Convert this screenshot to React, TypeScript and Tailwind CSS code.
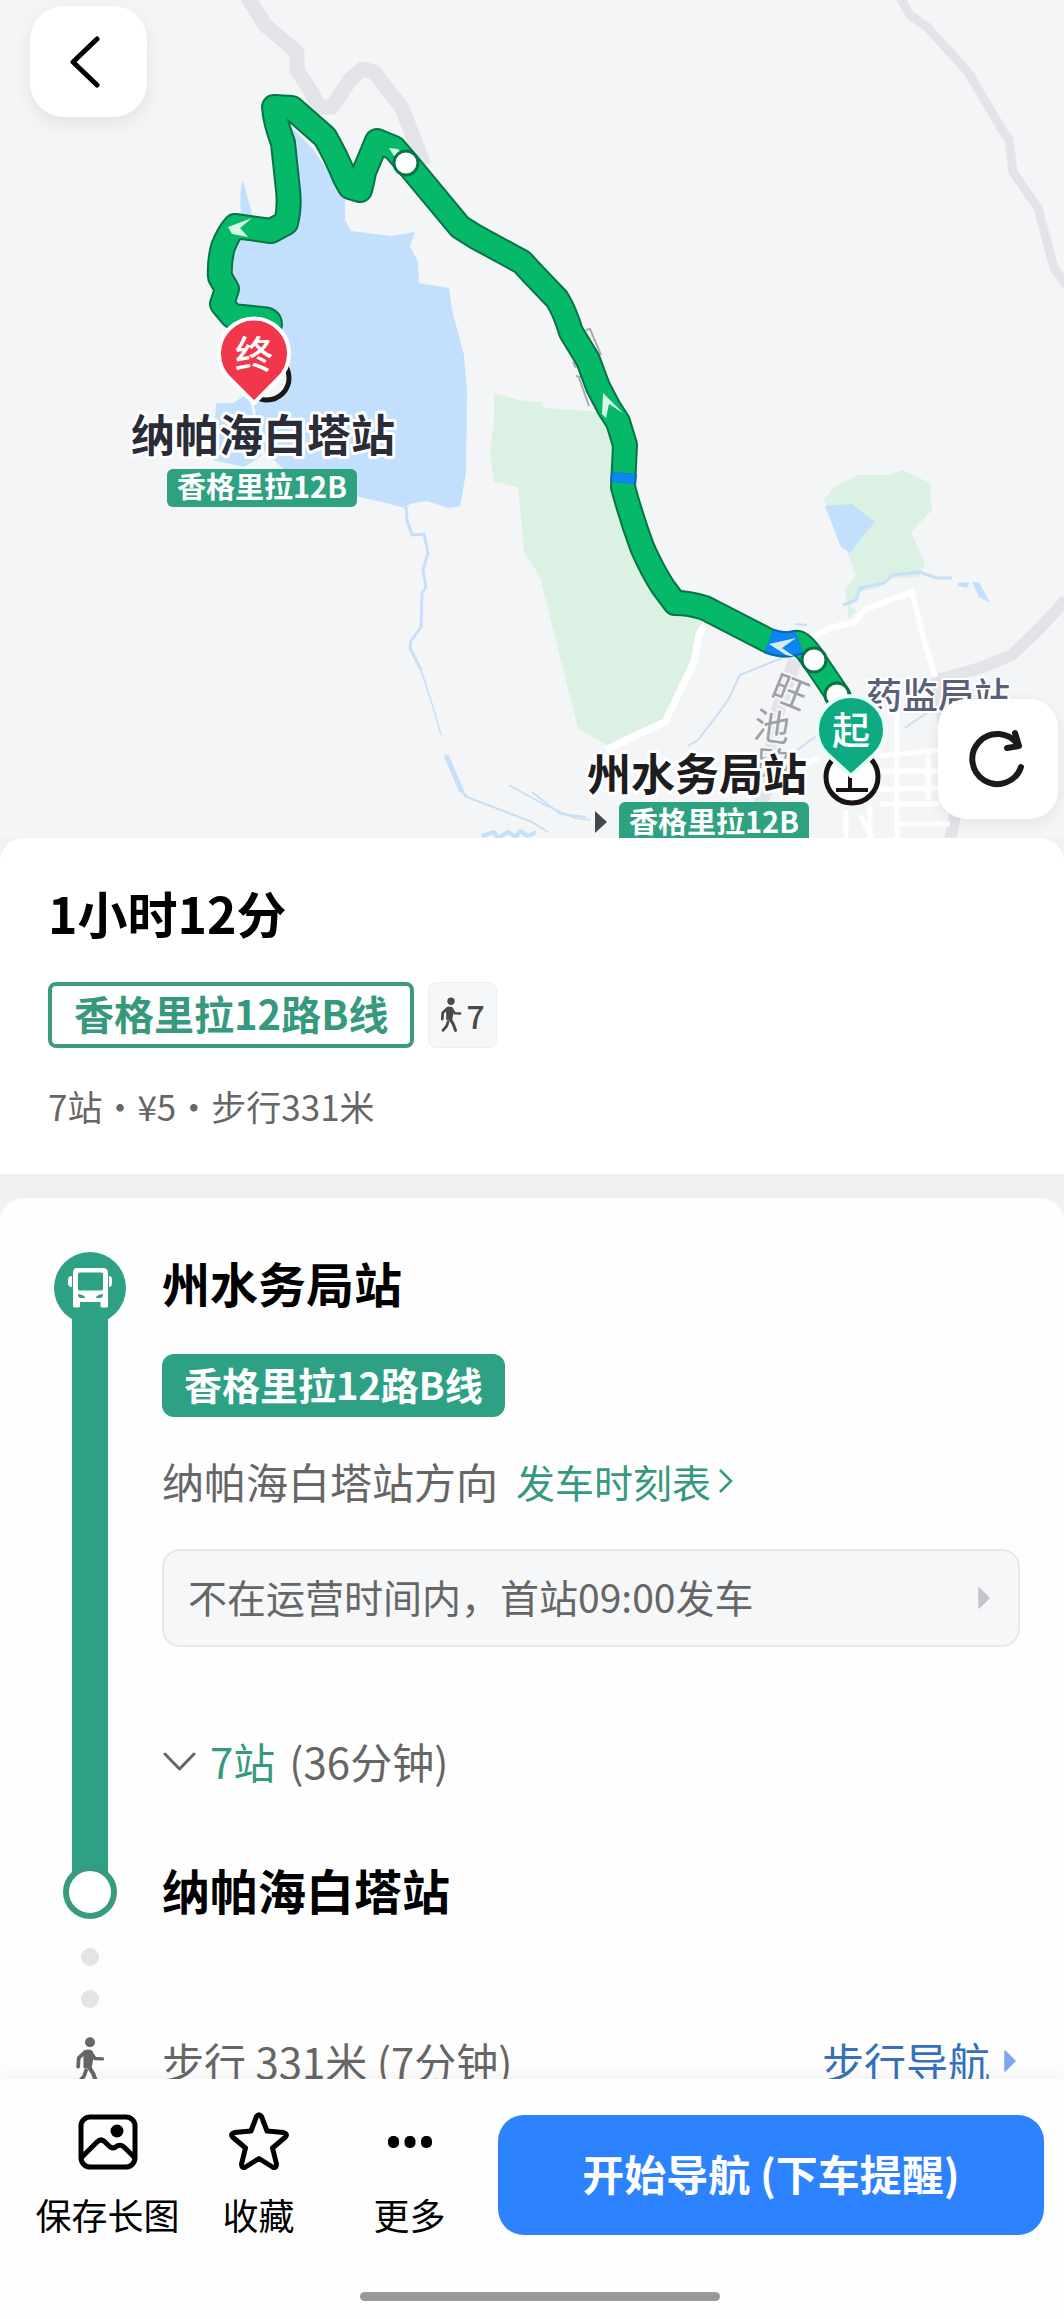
import React, { useState } from 'react';

interface IconProps {
  className?: string;
}

function WalkIcon({ className }: IconProps) {
  return (
    <svg viewBox="0 0 24 38" className={className} fill="none" stroke="currentColor" strokeLinecap="round" strokeLinejoin="round" aria-hidden="true">
      <circle cx="12" cy="4" r="4" fill="currentColor" stroke="none" />
      <path d="M7.5 11.5 Q10.5 9.5 13.5 11.5 L14 17 L12.5 24.5 L7.5 24 Z" fill="currentColor" strokeWidth="1.5" />
      <path d="M8 12 L3 16.500 L2.500 23.500" strokeWidth="3" />
      <path d="M13 12.500 L16 17 L22 17.300" strokeWidth="2.700" />
      <path d="M11 23.500 L14.500 29 L17 35.800" strokeWidth="3.300" />
      <path d="M8.800 26.500 L7.300 31 L3.200 35.800" strokeWidth="3" />
    </svg>
  );
}

function BusIcon({ className }: IconProps) {
  return (
    <svg viewBox="0 0 44 40" className={className} aria-hidden="true">
      <path
        fill="currentColor"
        fillRule="evenodd"
        d="M9 0H35Q40 0 40 5V38Q40 39.500 38.500 39.500H34Q32.500 39.500 32.500 38V34H12V38Q12 39.500 10.500 39.500H6.500Q5 39.500 5 38V5Q5 0 9 0ZM11.500 4.500Q10 4.500 10 6V21Q10 22.500 11.500 22.500H33.500Q35 22.500 35 21V6Q35 4.500 33.500 4.500ZM10 26Q10 30 13 30H17.500Q16 26.500 10 26ZM35 26Q35 30 32 30H27.500Q29 26.500 35 26Z"
      />
      <path fill="currentColor" d="M4 8V19Q0 19 0 15V12Q0 8 4 8ZM41 8V19Q44 19 44 15V12Q44 8 41 8Z" />
    </svg>
  );
}

function SolidArrow({ className }: IconProps) {
  return (
    <svg viewBox="0 0 12 22" className={className} aria-hidden="true">
      <path d="M1 1 L11 11 L1 21 Z" fill="currentColor" stroke="currentColor" strokeWidth="1.500" strokeLinejoin="round" />
    </svg>
  );
}

const ROUTE =
  'M270 324 Q270 319 262 319 L232 316 L222 304 L227 289 L220 277 Q219 262 223 247 Q228 234 235 226 L271 231 L286 223 Q290 208 288 190 L283 143 Q275 122 274 107 L292 108 L325 137 Q336 156 345 178 L350 187 L360 190 Q363 179 364 172 L377 141 L394 148 L406 162 L460 227 L476 237 L522 262 L534 275 L557 299 Q565 312 571 332 L588 360 L598 387 L609 408 L618 422 L625 445 L623 487 Q631 517 642 547 Q652 570 663 587 L675 603 Q690 603 705 608 L769 641 Q785 647 796 643 Q801 641 814 660 L839 697';

const PARK = '#dbf1e3';
const WATER = '#c2e0fd';

function RouteMap() {
  return (
    <svg viewBox="0 0 1064 838" className="block w-full bg-[#f3f5f7]" role="img" aria-label="路线地图">
      {/* parks */}
      <path fill={PARK} d="M494 393 L522 401 L542 402 L544 408 L600 412 L625 480 L645 560 L676 606 L704 615 L698 640 L690 668 L664 722 L630 735 L608 746 L578 728 L562 665 L540 577 L524 552 L522 527 L518 487 L494 482 L490 453 L494 420 Z" />
      <path fill={PARK} d="M824 500 L834 487 L858 475 L890 475 L902 470 L930 483 L932 510 L911 532 L925 563 L919 577 L888 578 L880 587 L857 593 L851 607 L857 610 L849 619 L845 590 L856 575 L848 553 Z" />

      {/* lake */}
      <path fill={WATER} d="M285 120 L312 148 L345 195 L345 220 L351 231 L391 236 L415 232 L410 246 L418 262 L419 283 L449 288 L452 310 L464 355 L467 390 L466 473 L460 506 L448 508 L427 501 L410 504 L405 508 L386 503 L356 496 L280 468 L262 455 L258 458 L244 467 L213 460 L216 403 L233 403 L250 392 L270 370 L240 320 L232 300 L232 270 L238 235 L272 243 L295 225 L298 190 Z" />
      <path fill={WATER} d="M243 181 Q239 186 241 217 L253 217 Q247 195 243 181 Z" />
      <path fill={WATER} d="M825 506 L852 504 L875 522 L862 537 L850 553 L841 547 Z" />
      <path fill="#f3f5f7" d="M250 400 L256 430 L262 459 L240 468 L285 470 L262 450 L254 405 Z" />

      {/* streams */}
      <g fill="none" stroke="#c7dff7" strokeWidth="3" strokeLinejoin="round">
        <path d="M406 507 L407 520 L412 535 L424 534 L428 553 L423 570 L426 587 L422 593 L421 627 L411 641 L410 648 L421 670" />
        <path strokeWidth="1.500" d="M421 670 L434 710 L441 735 M509 785 L545 805 L575 818 L590 820" />
        <path d="M446 755 L462 792" strokeWidth="5" />
        <path d="M462 792 L467 797" />
        <path strokeWidth="2" d="M467 797 L532 822 L548 832" />
        <path strokeWidth="2" d="M782 658 L740 675 L728 700 L715 718 L698 740 L688 746 M818 735 L790 755 L772 770 M532 792 L560 814 L586 817 M795 624 L807 625 M905 728 L928 712" />
        <path d="M843 605 L856 600 L860 588 L884 583 L893 575 L920 572 L936 578 L952 578" />
        <path fill={WATER} stroke="none" d="M972 582 L979 582 L990 603 L979 597 Z M958 583 L969 582 L967 588 L958 586 Z" />
        <path strokeWidth="4" d="M482 836 L494 832 L498 838 L508 832 L516 837 L520 831 L528 836 L536 832" />
      </g>

      {/* main roads */}
      <g fill="none" stroke="#e3e4e8" strokeLinejoin="round">
        <path strokeWidth="15" d="M247 -4 L265 25 L297 52 L297 70 L310 90 L319 107 L332 107 L350 80 L362 69 L374 72 L402 108 L424 165" />
        <path strokeWidth="9" d="M899 -4 L910 15 L927 27 L968 72 L1004 133 L1009 139 L1013 172 L1038 208 L1054 268 L1066 285" />
        <path strokeWidth="12" d="M1066 600 L1038 630 L1012 655 L980 668 L937 680 L945 730 L960 790 L950 840" />
        <path strokeWidth="14" d="M795 660 L775 720 L768 785 L745 840" />
      </g>
      <g fill="none" stroke="#ffffff" strokeLinejoin="round">
        <path strokeWidth="7" d="M704 626 L699 634 L694 662 L665 722 L630 738 L606 750" />
        <path strokeWidth="6" d="M812 638 L830 628 L855 622 L866 609 L890 600 L912 592 L924 640 L935 677" />
        <path strokeWidth="5" d="M897 705 V838 M880 756 L940 750 M878 771 H940 M860 790 L940 788 M880 804 H940 M897 824 L950 824 M928 748 V800 M846 810 V838 M860 815 L872 838 M870 806 V838 M800 765 L820 758" />
      </g>

      {/* road name running along the grey road */}
      <g className="font-['Noto_Sans_CJK_SC',sans-serif]" fill="#9da0a6" stroke="#f3f5f7" strokeWidth="4" paintOrder="stroke" fontSize="36" textAnchor="middle">
        <text transform="translate(790 692) rotate(22)" y="13">旺</text>
        <text transform="translate(772 727) rotate(8)" y="13">池</text>
        <text transform="translate(774 765) rotate(4)" y="13">路</text>
      </g>
      <g fill="none" stroke="#a8abb0" strokeWidth="2">
        <path d="M586 330 L590 329 L601 355 M579 378 L589 406 M576 376 L584 378 M573 362 L576 368" />
      </g>

      {/* route */}
      <path d={ROUTE} fill="none" stroke="#087346" strokeWidth="26" strokeLinejoin="round" strokeLinecap="round" />
      <path d={ROUTE} fill="none" stroke="#05b968" strokeWidth="22" strokeLinejoin="round" strokeLinecap="round" />
      <g fill="none">
        <path d="M769 641 Q785 647 799 642" stroke="#0868bd" strokeWidth="26" />
        <path d="M769 641 Q785 647 799 642" stroke="#0b86f2" strokeWidth="22" />
        <path d="M624 473 L623 483" stroke="#0868bd" strokeWidth="26" />
        <path d="M624 473 L623 483" stroke="#0b86f2" strokeWidth="22" />
      </g>
      <g fill="#d5f9e5">
        <path d="M228 227 L252 218 L240 228 L248 237 L232 234 Z" />
        <path d="M603 393 L623 413 L609 404 L606 418 L602 414 Z" />
        <path d="M769 644 L796 638 L782 648 L795 657 L786 655 Z" fill="#d8ecfd" />
        <path d="M389 148 L398 149 L402 154 L394 156 Z" />
      </g>
      <g fill="#ffffff" stroke="#087346" strokeWidth="3">
        <circle cx="406" cy="163" r="12" />
        <circle cx="814" cy="660" r="12" />
        <circle cx="837" cy="695" r="12" />
      </g>

      {/* stop signs under the pins */}
      <circle cx="267" cy="378" r="22" fill="#f6f7f5" stroke="#191919" strokeWidth="5" />
      <circle cx="852" cy="777" r="26" fill="#fdfdfd" stroke="#191313" strokeWidth="5" />
      <path d="M836 790 H868 M850 772 V790" stroke="#191313" strokeWidth="4" fill="none" />

      <g className="font-['Noto_Sans_CJK_SC',sans-serif] font-bold" textAnchor="middle" strokeLinejoin="round">
        <text x="938" y="709" fontSize="36" className="font-medium" fill="#5b6079" stroke="#ffffff" strokeWidth="4" paintOrder="stroke">药监局站</text>
        <text x="263" y="452" fontSize="44" fill="#2a2c38" stroke="#ffffff" strokeWidth="6" paintOrder="stroke">纳帕海白塔站</text>
        <text x="697" y="791" fontSize="44" fill="#1d1d1f" stroke="#ffffff" strokeWidth="6" paintOrder="stroke">州水务局站</text>
        <rect x="167" y="469" width="190" height="38" rx="6" fill="#2ea181" />
        <text x="262" y="498" fontSize="29" fill="#ffffff">香格里拉12B</text>
        <rect x="619" y="802" width="190" height="42" rx="6" fill="#2ea181" />
        <text x="714" y="833" fontSize="29" fill="#ffffff">香格里拉12B</text>
        <path d="M595 811 L607 822 L595 833 Z" fill="#45484b" />
      </g>

      {/* pins */}
      <g className="font-['Noto_Sans_CJK_SC',sans-serif] font-medium" textAnchor="middle" fontSize="38" fill="#ffffff">
        <path d="M254 403 L230 379 A35 35 0 1 1 278 379 Z" fill="#f2364b" stroke="#ffffff" strokeWidth="4" strokeLinejoin="round" />
        <text x="254" y="368">终</text>
        <path d="M851 776 L827 754 A34 34 0 1 1 875 754 Z" fill="#0eab83" stroke="#e9fff8" strokeWidth="4" strokeLinejoin="round" />
        <text x="851" y="744">起</text>
      </g>
    </svg>
  );
}

function Summary() {
  return (
    <section className="bg-white rounded-t-3xl px-12 pt-[42px] pb-11">
      <h1 className="text-[50px] leading-[64px] font-bold text-black">1小时12分</h1>
      <div className="mt-[38px] flex items-center gap-[14px]">
        <span className="h-[66px] flex items-center rounded-lg border-4 border-[#3d9a80] px-[22px] pb-1 text-[40px] leading-none font-bold text-[#36997e]">
          香格里拉12路B线
        </span>
        <span className="h-[66px] flex items-center gap-1 rounded-lg border border-[#eceef0] bg-[#f5f7f9] px-[11px] text-[32px] leading-none font-medium text-[#4a4a4c]">
          <WalkIcon className="w-[22px] h-9" />7
        </span>
      </div>
      <p className="mt-[34px] text-[35px] leading-[48px] text-[#666666]">7站・¥5・步行331米</p>
    </section>
  );
}

function Itinerary() {
  const [open, setOpen] = useState(false);

  return (
    <section className="flex-1 min-h-0 overflow-hidden bg-[#fefefe] rounded-t-3xl pl-[54px] pr-11 pt-[54px]">
      {/* Bus leg */}
      <div className="flex gap-9">
        <div className="w-[72px] shrink-0 flex flex-col items-center">
          <div className="w-[72px] h-[72px] shrink-0 rounded-full bg-[#2ea184] flex items-center justify-center text-white">
            <BusIcon className="w-11 h-10" />
          </div>
          <div className="flex-1 w-9 -mt-2 -mb-3 bg-[#2ea184]" />
        </div>
        <div className="flex-1 min-w-0 pb-[74px]">
          <h2 className="text-[48px] leading-[60px] font-bold text-black">州水务局站</h2>
          <div className="mt-[42px] flex">
            <span className="h-[63px] flex items-center rounded-xl bg-[#2ea184] px-[22px] pb-1 text-[38px] leading-none font-bold text-white">
              香格里拉12路B线
            </span>
          </div>
          <div className="mt-[34px] flex items-center gap-[18px]">
            <span className="text-[42px] leading-[60px] text-[#666666]">纳帕海白塔站方向</span>
            <a href="#timetable" className="flex items-center gap-2 text-[39px] leading-[60px] text-[#36997e]">
              发车时刻表
              <svg viewBox="0 0 14 24" className="w-[14px] h-6" fill="none" stroke="currentColor" strokeWidth="2.500" aria-hidden="true">
                <path d="M1 1 L12 12 L1 23" />
              </svg>
            </a>
          </div>
          <button className="mt-[38px] w-full h-[98px] flex items-center justify-between rounded-[18px] border-2 border-[#e7e8ea] bg-[#f5f7f9] pl-6 pr-7 text-[39px] leading-none text-[#666666]">
            <span className="pb-1">不在运营时间内，首站09:00发车</span>
            <SolidArrow className="w-3 h-[22px] text-[#c3c5c8]" />
          </button>
          <button
            onClick={() => setOpen(!open)}
            aria-expanded={open}
            className="mt-[84px] flex items-center gap-[14px] text-[42px] leading-[60px] text-[#666666]"
          >
            <svg viewBox="0 0 34 20" className="w-[34px] h-5" fill="none" stroke="currentColor" strokeWidth="3" strokeLinecap="round" strokeLinejoin="round" aria-hidden="true">
              <path d="M3 3 L17.500 18 L32 3" />
            </svg>
            <span className="text-[#36997e]">7站</span>
            <span>(36分钟)</span>
          </button>
        </div>
      </div>

      {/* Arrival stop */}
      <div className="flex gap-9">
        <div className="w-[72px] shrink-0 flex flex-col items-center pb-[29px]">
          <div className="relative w-[54px] h-[54px] rounded-full border-[6px] border-[#389b80] bg-white" />
          <div className="mt-[29px] w-[18px] h-[18px] rounded-full bg-[#e4e4e4]" />
          <div className="mt-6 w-[18px] h-[18px] rounded-full bg-[#e4e4e4]" />
        </div>
        <h2 className="text-[48px] leading-[48px] font-bold text-black">纳帕海白塔站</h2>
      </div>

      {/* Walking leg */}
      <div className="flex gap-9 text-[42px] leading-[48px] text-[#666666]">
        <div className="w-[72px] shrink-0 flex justify-center">
          <WalkIcon className="w-[30px] h-12" />
        </div>
        <span className="flex-1">步行 331米 (7分钟)</span>
        <a href="#walk" className="mr-1 flex items-center gap-[14px] text-[#3670bd]">
          步行导航
          <SolidArrow className="w-3 h-[22px] text-[#7ea6f0]" />
        </a>
      </div>
    </section>
  );
}

interface ActionProps {
  label: string;
  children: React.ReactNode;
}

function Action({ label, children }: ActionProps) {
  return (
    <button className="w-[151px] shrink-0 flex flex-col items-center gap-[18px] text-[36px] leading-[48px] text-black whitespace-nowrap">
      <svg viewBox="0 0 60 60" className="w-[60px] h-[60px]" fill="none" stroke="currentColor" strokeWidth="5" strokeLinejoin="round" aria-hidden="true">
        {children}
      </svg>
      {label}
    </button>
  );
}

function BottomBar() {
  return (
    <footer className="relative bg-[#fefefe] pt-[33px] pb-[18px] shadow-[0_-4px_16px_rgba(0,0,0,0.05)]">
      <div className="flex items-center pl-8 pr-5">
        <Action label="保存长图">
          <rect x="3" y="5" width="54" height="50" rx="9" />
          <path d="M3 46 L19 30 Q23 26 27 30 L31 34 Q35 38 39 34 Q43 32 46 35 L57 46" />
          <circle cx="39" cy="19" r="6.500" fill="currentColor" stroke="none" />
        </Action>
        <Action label="收藏">
          <path d="M27.500 4.500 Q30 1 32.500 4.500 L38 19 L54.500 20.500 Q59 22 56.500 25 L43.500 36 L47.500 52 Q47.500 57 43.500 55 L30 46.500 L16.500 55 Q12.500 57 12.500 52 L16.500 36 L3.500 25 Q1 22 5.500 20.500 L22 19 Z" />
        </Action>
        <Action label="更多">
          <g fill="currentColor" stroke="none">
            <rect x="8" y="24" width="11" height="12" rx="5" />
            <rect x="24.500" y="24" width="11" height="12" rx="5" />
            <rect x="41" y="24" width="11" height="12" rx="5" />
          </g>
        </Action>
        <button className="ml-[13px] flex-1 h-[120px] rounded-[26px] bg-[#2d82ff] pb-1 text-[42px] leading-none font-bold text-white">
          开始导航 (下车提醒)
        </button>
      </div>
      <div className="mt-[54px] flex justify-center pl-4">
        <div className="w-[360px] h-[9px] rounded-full bg-[#999999]" />
      </div>
    </footer>
  );
}

export default function App() {
  return (
    <div className="h-screen flex flex-col overflow-hidden bg-[#f0f2f3] font-['Noto_Sans_CJK_SC',sans-serif]">
      <div className="relative shrink-0">
        <RouteMap />
        <button
          aria-label="返回"
          className="absolute left-[30px] top-[6px] w-[117px] h-[111px] rounded-[34px] bg-white shadow-[0_6px_18px_rgba(0,0,0,0.08)] flex items-center justify-center"
        >
          <svg viewBox="0 0 30 52" className="w-[30px] h-[52px] mr-2" fill="none" stroke="#000000" strokeWidth="5" strokeLinecap="round" strokeLinejoin="round" aria-hidden="true">
            <path d="M27 3 L3 26 L27 49" />
          </svg>
        </button>
        <button
          aria-label="刷新"
          className="absolute right-[6px] bottom-[19px] w-[120px] h-[120px] rounded-[28px] bg-white shadow-[0_4px_16px_rgba(0,0,0,0.08)] flex items-center justify-center"
        >
          <svg viewBox="0 0 60 60" className="w-[60px] h-[60px]" fill="none" stroke="#1a1a1a" strokeWidth="6" strokeLinecap="round" strokeLinejoin="round" aria-hidden="true">
            <path d="M53 38 A25 25 0 1 1 50 16" />
            <path d="M47 4 L51 17 L39 19" strokeWidth="6" />
          </svg>
        </button>
      </div>
      <Summary />
      <div className="h-6 shrink-0 bg-[#eef0f1]" />
      <Itinerary />
      <BottomBar />
    </div>
  );
}
